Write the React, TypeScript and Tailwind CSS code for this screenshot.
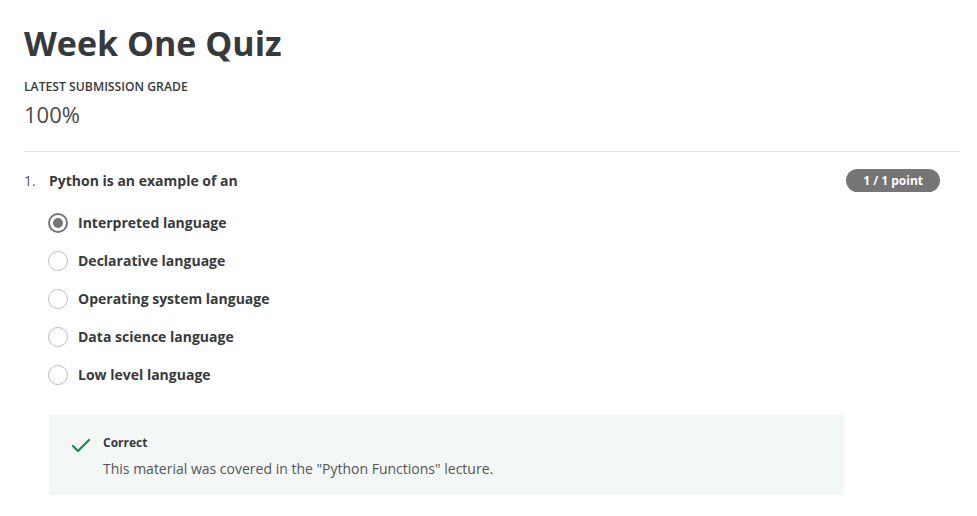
import { Check } from 'lucide-react';

const options = [
  'Interpreted language',
  'Declarative language',
  'Operating system language',
  'Data science language',
  'Low level language',
];

const SELECTED = 0;

function Radio({ checked }: { checked: boolean }) {
  if (checked) {
    return (
      <span className="flex h-[20px] w-[20px] shrink-0 items-center justify-center rounded-full border-2 border-[#757575]">
        <span className="h-[10px] w-[10px] rounded-full bg-[#757575]" />
      </span>
    );
  }
  return <span className="h-[20px] w-[20px] shrink-0 rounded-full border-[1.5px] border-[#bdbdbd] bg-white" />;
}

export default function App() {
  return (
    <div
      className="min-h-screen bg-white pl-[24px] pr-[17px] text-[#373a3c]"
      style={{ fontFamily: '"Open Sans", "Noto Sans", sans-serif' }}
    >
      {/* Header */}
      <div className="pt-[20px] pb-[22px]">
        <h1 className="text-[34px] font-bold leading-[46px] text-[#373a3c]">Week One Quiz</h1>
        <div className="mt-[13px] text-[12.2px] font-semibold uppercase leading-[16px] text-[#373a3c]">
          Latest Submission Grade
        </div>
        <div className="mt-[4px] text-[22px] leading-[30px] text-[#4a4a4a]">100%</div>
      </div>

      <div className="border-t border-[#e1e1e1]" />

      {/* Question */}
      <div className="pt-[17px]">
        <div className="flex items-center justify-between">
          <div className="flex items-center">
            <span className="w-[25px] text-[14px] leading-[22px] text-[#555]">1.</span>
            <span className="text-[14px] font-bold leading-[22px] text-[#373a3c]">Python is an example of an</span>
          </div>
          <span className="mr-[20px] rounded-full bg-[#757575] px-[17px] text-[12px] font-bold leading-[23px] text-white">
            1 / 1 point
          </span>
        </div>

        <div className="mt-[21px] flex flex-col gap-[18px] pl-[24px]">
          {options.map((opt, i) => (
            <label key={opt} className="flex items-center gap-[10px]">
              <Radio checked={i === SELECTED} />
              <span className="text-[14px] font-bold leading-[20px] text-[#373a3c]">{opt}</span>
            </label>
          ))}
        </div>

        {/* Feedback */}
        <div className="mt-[30px] ml-[25px] flex w-[795px] gap-[10px] bg-[#f3f8f6] pl-[20px] pt-[18px] pb-[16px]">
          <Check className="mt-[1px] h-[24px] w-[24px] text-[#1f8354]" strokeWidth={2.2} />
          <div className="pt-[2px]">
            <div className="text-[12px] font-bold leading-[16px] text-[#373a3c]">Correct</div>
            <div className="mt-[8px] text-[14px] leading-[20px] text-[#555]">
              This material was covered in the "Python Functions" lecture.
            </div>
          </div>
        </div>
      </div>
    </div>
  );
}
